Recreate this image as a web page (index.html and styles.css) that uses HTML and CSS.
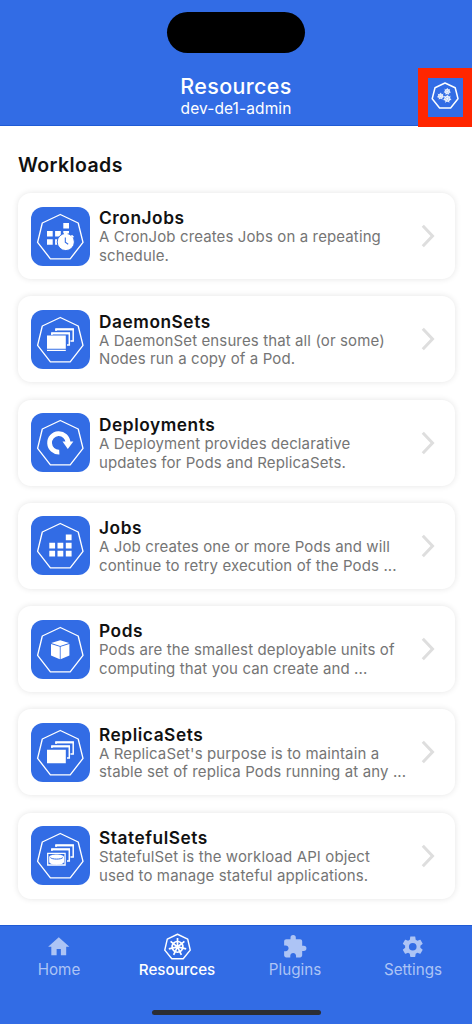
FILE: index.html
```html
<!DOCTYPE html>
<html lang="en">
<head>
<meta charset="utf-8">
<title>Resources</title>
<link rel="stylesheet" href="styles.css">
</head>
<body>
<svg class="sprite" aria-hidden="true">
  <symbol id="hepta" viewBox="0 0 59 59"><path d="M29.3 7.5 47.2 16 52 35.4 39.2 51.8H19.4L6.6 35.4 11.3 16Z" fill="none" stroke="#fff" stroke-width="1.35" stroke-linejoin="round"/></symbol>
  <symbol id="stack" viewBox="0 0 59 59"><path d="M20.9 25V23.5H38.3V35H36M25 21V19.5H42.2V31H39.5" fill="none" stroke="#fff" stroke-width="1.5"/><path d="M20.2 23.3H39M24.3 19.3H42.9" stroke="#fff" stroke-width="2"/></symbol>
  <symbol id="wheel" viewBox="-10 -10 20 20"><g fill="none" stroke="#fff" stroke-width="1.8"><circle r="5.7"/><path d="M0-9.4V-1M7.3-5.9.8-.6M9.2 2.1 1 .2M4.1 8.5.4.9M-4.1 8.5-.4.9M-9.2 2.1-1 .2M-7.3-5.9-.8-.6"/></g><circle r="1.6" fill="#fff"/></symbol>
</svg>
<div class="screen">
  <header class="header">
    <div class="island"></div>
    <div class="heading"><h1>Resources</h1><p>dev-de1-admin</p></div>
    <div class="highlight">
      <svg viewBox="0 0 34 40"><path d="M17 5 27.2 9.7 30 20.8 22.6 30H11.6L4.2 20.8 7 9.7Z" fill="none" stroke="#fff" stroke-width="1.5" stroke-linejoin="round"/><g fill="#fff" fill-opacity=".45"><circle cx="12.6" cy="18.2" r="2.8"/><circle cx="19.3" cy="13.5" r="2.8"/><circle cx="19.3" cy="20.8" r="3.3"/></g><use href="#wheel" x="8.8" y="14.4" width="7.6" height="7.6"/><use href="#wheel" x="15.5" y="9.7" width="7.6" height="7.6"/><use href="#wheel" x="14.9" y="16.4" width="8.8" height="8.8"/></svg>
    </div>
  </header>
  <main class="content">
    <h2>Workloads</h2>
    <div class="cards">
      <article class="card">
        <svg class="tile" viewBox="0 0 59 59"><use href="#hepta"/><path d="M32.3 16h5.7v5.4h-5.7zM16 24h5.7v5.4H16zM24.1 24h5.7v5.4h-5.7zM32.3 24h5.7v5.4h-5.7zM16 32.3h5.7v5.4H16zM24.1 32.3h5.7v5.4h-5.7z" fill="#fff"/><circle cx="34.8" cy="35" r="8.6" fill="#fff" stroke="#326ce5" stroke-width="1"/><path d="M33 25.7h3.7v2H33zM41 27.7l2 2-1.2 1.2-2-2z" fill="#fff"/><path d="M34.3 30.5v4.8l2.9 1.9" fill="none" stroke="#326ce5" stroke-width="1.1"/></svg>
        <div class="text"><h3>CronJobs</h3><p>A CronJob creates Jobs on a repeating<br>schedule.</p></div>
        <svg class="chevron" viewBox="0 0 14 24"><path d="m1.8 1.8 9.7 10.2-9.7 10.2"/></svg>
      </article>
      <article class="card">
        <svg class="tile" viewBox="0 0 59 59"><use href="#hepta"/><use href="#stack"/><path d="M16 25.5h18.8v13.2H16zM16 39.7h18.8v1.3H16z" fill="#fff"/></svg>
        <div class="text"><h3>DaemonSets</h3><p>A DaemonSet ensures that all (or some)<br>Nodes run a copy of a Pod.</p></div>
        <svg class="chevron" viewBox="0 0 14 24"><path d="m1.8 1.8 9.7 10.2-9.7 10.2"/></svg>
      </article>
      <article class="card">
        <svg class="tile" viewBox="0 0 59 59"><use href="#hepta"/><path d="M28.3 39.1A9.2 9.2 0 1 1 37 29.5" fill="none" stroke="#fff" stroke-width="4.8"/><path d="M31.5 28.5h10.9L36.8 36z" fill="#fff"/></svg>
        <div class="text"><h3>Deployments</h3><p>A Deployment provides declarative<br>updates for Pods and ReplicaSets.</p></div>
        <svg class="chevron" viewBox="0 0 14 24"><path d="m1.8 1.8 9.7 10.2-9.7 10.2"/></svg>
      </article>
      <article class="card">
        <svg class="tile" viewBox="0 0 59 59"><use href="#hepta"/><path d="M34.8 18.5h5.8v5.8h-5.8zM18.3 26.7h5.8v5.8h-5.8zM26.5 26.7h5.8v5.8h-5.8zM34.8 26.7h5.8v5.8h-5.8zM18.3 34.8h5.8v5.8h-5.8zM26.5 34.8h5.8v5.8h-5.8zM34.8 34.8h5.8v5.8h-5.8z" fill="#fff"/></svg>
        <div class="text"><h3>Jobs</h3><p>A Job creates one or more Pods and will<br>continue to retry execution of the Pods ...</p></div>
        <svg class="chevron" viewBox="0 0 14 24"><path d="m1.8 1.8 9.7 10.2-9.7 10.2"/></svg>
      </article>
      <article class="card">
        <svg class="tile" viewBox="0 0 59 59"><use href="#hepta"/><path d="m29.2 20.2 9 2.8-9 2.9-9-2.9zM20 24l8.8 2.8v12.4L20 35.6zM38.4 24l-8.8 2.8v12.4l8.8-3.6z" fill="#fff"/></svg>
        <div class="text"><h3>Pods</h3><p>Pods are the smallest deployable units of<br>computing that you can create and ...</p></div>
        <svg class="chevron" viewBox="0 0 14 24"><path d="m1.8 1.8 9.7 10.2-9.7 10.2"/></svg>
      </article>
      <article class="card">
        <svg class="tile" viewBox="0 0 59 59"><use href="#hepta"/><use href="#stack"/><path d="M16 26.7h18.8v13.5H16z" fill="#fff"/></svg>
        <div class="text"><h3>ReplicaSets</h3><p>A ReplicaSet's purpose is to maintain a<br>stable set of replica Pods running at any ...</p></div>
        <svg class="chevron" viewBox="0 0 14 24"><path d="m1.8 1.8 9.7 10.2-9.7 10.2"/></svg>
      </article>
      <article class="card">
        <svg class="tile" viewBox="0 0 59 59"><use href="#hepta"/><use href="#stack"/><path d="M16.7 27.3h17.4V39H16.7z" fill="none" stroke="#fff" stroke-width="1.3"/><path d="M18.2 31.1c0-3.4 14.8-3.4 14.8 0v5c0 3.4-14.8 3.4-14.8 0z" fill="#fff"/><path d="M19.4 31.6c1.5 2 10.9 2 12.4 0" fill="none" stroke="#326ce5" stroke-width="1"/></svg>
        <div class="text"><h3>StatefulSets</h3><p>StatefulSet is the workload API object<br>used to manage stateful applications.</p></div>
        <svg class="chevron" viewBox="0 0 14 24"><path d="m1.8 1.8 9.7 10.2-9.7 10.2"/></svg>
      </article>
    </div>
  </main>
  <nav class="tabs">
    <div class="tab"><svg viewBox="0 0 24 24"><path d="M10 20v-6h4v6h5v-8h3L12 3 2 12h3v8z"/></svg><span>Home</span></div>
    <div class="tab active"><svg viewBox="0 0 28 28"><path d="M14 1.3 24.6 6.3 27.2 17.8 19.9 26.7H8.1L.8 17.8 3.4 6.3Z" fill="none" stroke="#fff" stroke-width="1.5" stroke-linejoin="round"/><use href="#wheel" x="4.2" y="4.6" width="19.6" height="19.6"/></svg><span>Resources</span></div>
    <div class="tab"><svg viewBox="0 0 24 24"><path d="M20.5 11H19V7c0-1.1-.9-2-2-2h-4V3.5a2.5 2.5 0 0 0-5 0V5H4c-1.1 0-1.99.9-1.99 2v3.8H3.5c1.49 0 2.7 1.21 2.7 2.7s-1.21 2.7-2.7 2.7H2V20c0 1.1.9 2 2 2h3.8v-1.5c0-1.49 1.21-2.7 2.7-2.7s2.7 1.21 2.7 2.7V22H17c1.1 0 2-.9 2-2v-4h1.5a2.5 2.5 0 0 0 0-5z"/></svg><span>Plugins</span></div>
    <div class="tab"><svg viewBox="0 0 24 24"><path d="M19.14 12.94c.04-.3.06-.61.06-.94 0-.32-.02-.64-.07-.94l2.03-1.58c.18-.14.23-.41.12-.61l-1.92-3.32c-.12-.22-.37-.29-.59-.22l-2.39.96c-.5-.38-1.03-.7-1.62-.94l-.36-2.54c-.04-.24-.24-.41-.48-.41h-3.84c-.24 0-.43.17-.47.41l-.36 2.54c-.59.24-1.13.57-1.62.94l-2.39-.96c-.22-.08-.47 0-.59.22L2.74 8.87c-.12.21-.08.47.12.61l2.03 1.58c-.05.3-.09.63-.09.94s.02.64.07.94l-2.03 1.58c-.18.14-.23.41-.12.61l1.92 3.32c.12.22.37.29.59.22l2.39-.96c.5.38 1.03.7 1.62.94l.36 2.54c.05.24.24.41.48.41h3.84c.24 0 .44-.17.47-.41l.36-2.54c.59-.24 1.13-.56 1.62-.94l2.39.96c.22.08.47 0 .59-.22l1.92-3.32c.12-.22.07-.47-.12-.61zM12 15.6A3.6 3.6 0 1 1 12 8.4a3.6 3.6 0 0 1 0 7.2z"/></svg><span>Settings</span></div>
    <div class="home-indicator"></div>
  </nav>
</div>
</body>
</html>
```

FILE: styles.css
```css
* { box-sizing: border-box; }
body, h1, h2, h3, p { margin: 0; }
body { font-family: Inter, "Liberation Sans", sans-serif; background: #fff; }
svg { display: block; flex: none; }
.sprite { position: absolute; width: 0; height: 0; }
.screen { width: 472px; height: 1024px; display: flex; flex-direction: column; overflow: hidden; }

.header { position: relative; flex: none; height: 126px; background: #326ce5; display: flex; flex-direction: column; align-items: center; padding-top: 12px; border-bottom: 1px solid #1f5bd5; }
.island { width: 138px; height: 41px; border-radius: 21px; background: #000; flex: none; }
.heading { margin-top: 20px; text-align: center; color: #fff; }
.heading h1 { font-size: 21.5px; font-weight: 500; line-height: 27px; letter-spacing: .35px; }
.heading p { font-size: 15.5px; line-height: 18px; letter-spacing: .1px; }
.highlight { position: absolute; top: 67.5px; right: 0; width: 54px; height: 59.5px; border: 10px solid #ff2600; border-right-width: 9px; background: #326ce5; }
.highlight svg { width: 34px; height: 40px; }

.content { flex: 1; min-height: 0; padding: 27px 17px 0 18px; }
.content h2 { font-size: 19.5px; font-weight: 600; line-height: 24px; letter-spacing: .4px; color: #111; }
.cards { margin-top: 16px; display: flex; flex-direction: column; gap: 17.25px; }
.card { height: 86px; flex: none; border-radius: 13px; background: #fff; box-shadow: 0 0 6px rgba(0, 0, 0, .11); display: flex; align-items: center; padding: 0 20px 0 13px; }
.tile { width: 59px; height: 59px; border-radius: 12px; background: #326ce5; }
.text { flex: 1; margin-left: 9px; padding-top: 2px; white-space: nowrap; }
.text h3 { font-size: 17.3px; font-weight: 600; line-height: 20px; letter-spacing: .55px; color: #111; }
.text p { font-size: 15px; line-height: 18.7px; letter-spacing: .12px; color: #757575; }
.chevron { width: 14px; height: 24px; }
.chevron path { fill: none; stroke: #dedede; stroke-width: 3; }

.tabs { position: relative; flex: none; height: 99px; background: #326ce5; border-top: 1px solid #1f5bd5; display: grid; grid-template-columns: repeat(4, 1fr); padding-top: 7px; }
.tab { display: flex; flex-direction: column; align-items: center; color: #adc4f5; fill: #adc4f5; font-size: 15.2px; line-height: 20px; letter-spacing: 0; }
.tab svg { width: 25.5px; height: 25.5px; margin: .75px 0; }
.tab.active svg { width: 27px; height: 27px; margin: 0; }
.active { color: #fff; font-weight: 500; }
.home-indicator { position: absolute; left: 151.5px; bottom: 9px; width: 169px; height: 5px; border-radius: 3px; background: #2b2d33; }
```
